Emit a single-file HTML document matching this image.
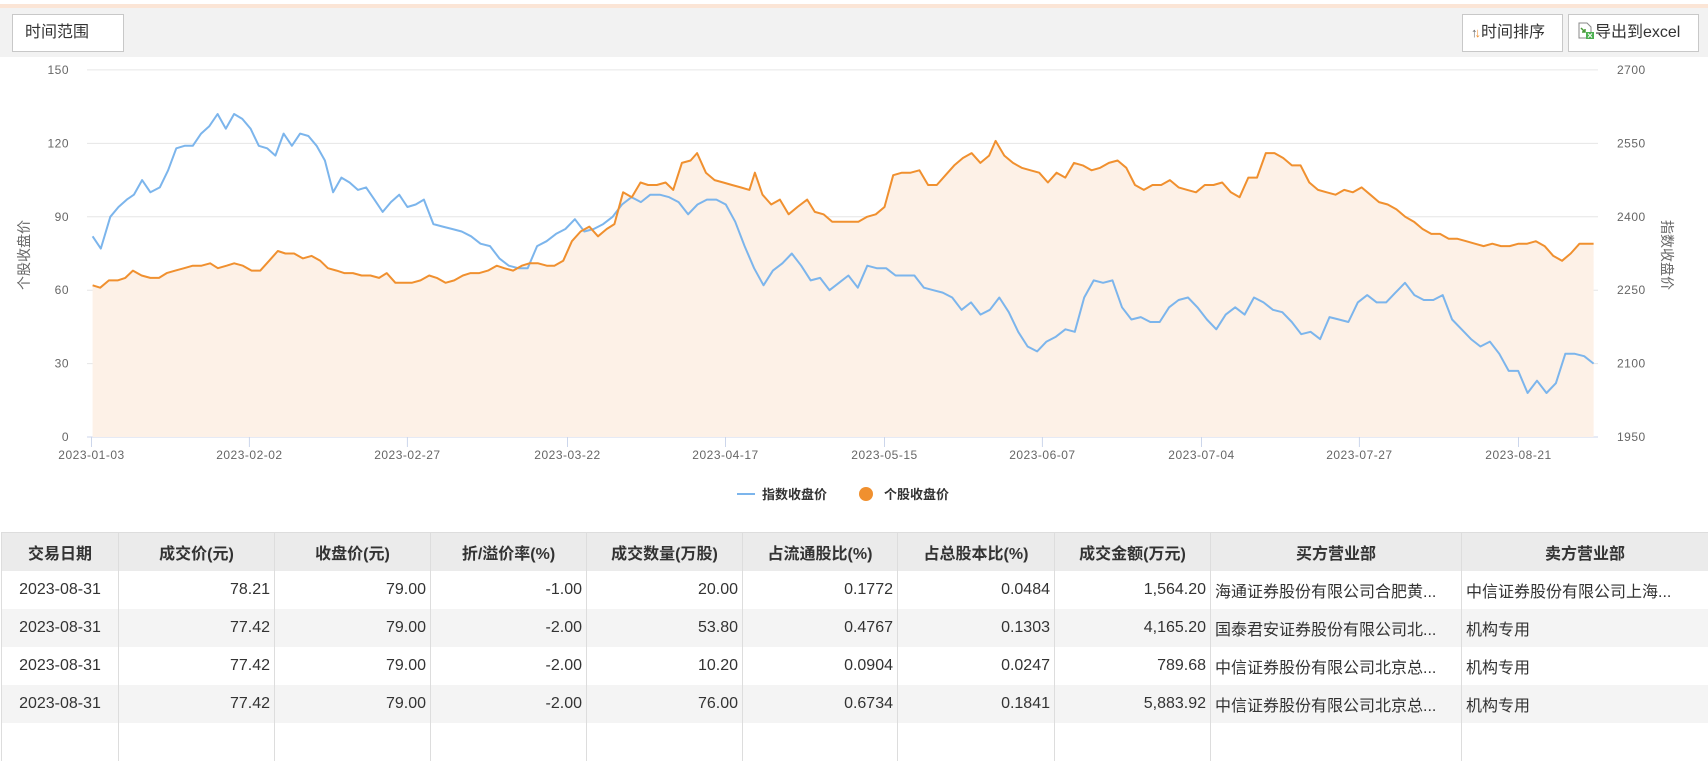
<!DOCTYPE html>
<html><head><meta charset="utf-8"><style>
*{margin:0;padding:0;box-sizing:border-box}
body{width:1708px;height:728px;overflow:hidden;background:#fff;font-family:"Liberation Sans","Noto Sans CJK SC",sans-serif;position:relative}
.top{position:absolute;left:0;top:4px;width:1708px;height:4px;background:#fbe5d6}
.bar{position:absolute;left:0;top:8px;width:1708px;height:49px;background:#f2f2f2}
.btn{position:absolute;background:#fff;border:1px solid #c8c8c8;font-size:16px;color:#333;line-height:36px;padding-left:12px}
table{position:absolute;left:1px;top:532px;border-collapse:collapse;width:1707px;font-size:16px;color:#333;table-layout:fixed}
th{background:#ebebeb;font-weight:bold;height:38px;border-left:1px solid #ddd;border-top:1px solid #ddd;text-align:center}
td{height:38px;border-left:1px solid #ddd;text-align:right;padding-right:4px;white-space:nowrap;overflow:hidden}
tr:nth-child(odd) td{background:#f4f4f4}
td.c{text-align:center;padding:0}
td.l{text-align:left;padding-left:4px}
svg{position:absolute;left:0;top:0}
</style></head><body>
<div class="top"></div>
<div class="bar"></div>
<div class="btn" style="left:12px;top:14px;width:112px;height:38px">时间范围</div>
<div class="btn" style="left:1462px;top:14px;width:101px;height:38px;padding-left:8px"><span style="color:#666;font-size:13px">↑</span><span style="color:#f0902f;font-size:13px;margin-left:-3px">↓</span>时间排序</div>
<div class="btn" style="left:1568px;top:14px;width:131px;height:38px;padding-left:8px"><svg style="position:relative;display:inline-block;vertical-align:-3px" width="18" height="18" viewBox="0 0 18 18"><path d="M2 1h8l4 4v11H2z" fill="#fff" stroke="#888"/><path d="M4 6l4 4M8 7v3H5" stroke="#4a9a3a" fill="none" stroke-width="1.5"/><rect x="9" y="10" width="8" height="7" fill="#4caf50"/><path d="M11 11.5l4 4M15 11.5l-4 4" stroke="#fff"/></svg>导出到excel</div>
<svg id="c" width="1708" height="520"></svg>
<table>
<colgroup><col style="width:117px"><col style="width:156px"><col style="width:156px"><col style="width:156px"><col style="width:156px"><col style="width:155px"><col style="width:157px"><col style="width:156px"><col style="width:251px"><col></colgroup>
<tr><th>交易日期</th><th>成交价(元)</th><th>收盘价(元)</th><th>折/溢价率(%)</th><th>成交数量(万股)</th><th>占流通股比(%)</th><th>占总股本比(%)</th><th>成交金额(万元)</th><th>买方营业部</th><th>卖方营业部</th></tr>
<tr><td class="c">2023-08-31</td><td>78.21</td><td>79.00</td><td>-1.00</td><td>20.00</td><td>0.1772</td><td>0.0484</td><td>1,564.20</td><td class="l">海通证券股份有限公司合肥黄...</td><td class="l">中信证券股份有限公司上海...</td></tr>
<tr><td class="c">2023-08-31</td><td>77.42</td><td>79.00</td><td>-2.00</td><td>53.80</td><td>0.4767</td><td>0.1303</td><td>4,165.20</td><td class="l">国泰君安证券股份有限公司北...</td><td class="l">机构专用</td></tr>
<tr><td class="c">2023-08-31</td><td>77.42</td><td>79.00</td><td>-2.00</td><td>10.20</td><td>0.0904</td><td>0.0247</td><td>789.68</td><td class="l">中信证券股份有限公司北京总...</td><td class="l">机构专用</td></tr>
<tr><td class="c">2023-08-31</td><td>77.42</td><td>79.00</td><td>-2.00</td><td>76.00</td><td>0.6734</td><td>0.1841</td><td>5,883.92</td><td class="l">中信证券股份有限公司北京总...</td><td class="l">机构专用</td></tr>
<tr><td class="c"></td><td></td><td></td><td></td><td></td><td></td><td></td><td></td><td></td><td></td></tr>
</table>
<script>
var S=1708/1568;
function X(x){return (x*S).toFixed(1)}
function Y(v){return (437-v*2.447).toFixed(1)}
var blue=[85,82,92,77,100,90,107,94,114,97,120,99,127,105,134,100,142,102,149,109,156,118,163,119,170,119,177,124,184,127,191,132,198,126,205,132,212,130,219,126,226,119,233,118,240,115,247,124,254,119,261,124,268,123,275,119,282,113,289,100,296,106,303,104,310,101,317,102,324,97,331,92,338,96,345,99,352,94,359,95,366,97,374,87,382,86,390,85,398,84,406,82,414,79,422,78,430,73,438,70,446,69,454,69,462,78,470,80,478,83,486,85,494,89,502,84,510,85,518,87,526,90,534,95,542,98,550,96,558,99,566,99,574,98,582,96,590,91,598,95,606,97,614,97,622,95,630,88,638,78,646,69,654,62,662,68,670,71,678,75,686,70,694,64,702,65,710,60,718,63,726,66,734,61,742,70,750,69,758,69,766,66,774,66,782,66,790,61,798,60,806,59,814,57,822,52,830,55,838,50,846,52,854,57,862,51,870,43,878,37,886,35,894,39,902,41,910,44,918,43,926,57,934,64,942,63,950,64,958,53,966,48,974,49,982,47,990,47,998,53,1006,56,1014,57,1022,53,1030,48,1038,44,1046,50,1054,53,1062,50,1070,57,1078,55,1086,52,1094,51,1102,47,1110,42,1118,43,1126,40,1134,49,1142,48,1150,47,1158,55,1166,58,1174,55,1182,55,1190,59,1198,63,1206,58,1214,56,1222,56,1230,58,1238,48,1246,44,1254,40,1262,37,1270,39,1278,34,1286,27,1294,27,1302,18,1310,23,1318,18,1326,22,1334,34,1342,34,1350,33,1358,30];
var bx=[];for(var i=0;i<blue.length;i+=2){bx.push([85+(blue[i]-85)*(1463-85)/(1358-85),blue[i+1]]);}
var org=[85,62,92,61,100,64,108,64,115,65,122,68,130,66,138,65,146,65,153,67,161,68,169,69,177,70,185,70,193,71,200,69,208,70,215,71,223,70,231,68,239,68,247,72,255,76,262,75,270,75,278,73,286,74,294,72,301,69,309,68,316,67,324,67,332,66,340,66,348,65,355,67,363,63,370,63,378,63,386,64,394,66,401,65,409,63,417,64,425,66,432,67,440,67,448,68,456,70,463,69,471,68,479,70,486,71,494,71,502,70,509,70,517,72,525,80,533,84,541,86,549,82,557,85,564,87,572,100,580,98,588,104,595,103,603,103,611,104,618,101,626,112,634,113,640,116,648,108,656,105,664,104,672,103,680,102,688,101,693,108,700,99,708,95,716,97,724,91,732,94,741,97,748,92,756,91,764,88,772,88,780,88,788,88,796,90,804,91,812,94,820,107,828,108,836,108,844,109,852,103,860,103,868,107,876,111,884,114,892,116,900,112,908,115,914,121,922,115,930,112,938,110,946,109,954,108,962,104,970,108,978,106,986,112,994,111,1002,109,1010,110,1018,112,1026,113,1034,110,1042,103,1050,101,1058,103,1066,103,1074,105,1082,102,1090,101,1098,100,1106,103,1114,103,1122,104,1130,100,1138,98,1146,106,1154,106,1162,116,1170,116,1178,114,1186,111,1194,111,1202,104,1210,101,1218,100,1226,99,1234,101,1242,100,1250,102,1258,99,1266,96,1274,95,1282,93,1290,90,1298,88,1306,85,1314,83,1322,83,1330,81,1338,81,1346,80,1354,79,1362,78,1370,79,1378,78,1386,78,1394,79,1402,79,1410,80,1418,78,1426,74,1434,72,1442,75,1450,79,1458,79,1463,79];
var s='';
[0,30,60,90,120,150].forEach(function(v){s+='<line x1="87" x2="1598" y1="'+Y(v)+'" y2="'+Y(v)+'" stroke="'+(v==0?'#ccd6eb':'#e6e6e6')+'"/>';s+='<text x="69" y="'+(+Y(v)+4)+'" text-anchor="end" font-size="12" fill="#666" letter-spacing="0.5">'+v+'</text>';});
[1950,2100,2250,2400,2550,2700].forEach(function(p,i){s+='<text x="1617" y="'+(+Y(i*30)+4)+'" font-size="12" fill="#666" letter-spacing="0.5">'+p+'</text>';});
var d=['2023-01-03','2023-02-02','2023-02-27','2023-03-22','2023-04-17','2023-05-15','2023-06-07','2023-07-04','2023-07-27','2023-08-21'];
var dx=[84,229,374,521,666,812,957,1103,1248,1394];
d.forEach(function(t,i){var x=X(dx[i]);s+='<line x1="'+x+'" x2="'+x+'" y1="437" y2="447" stroke="#ccd6eb"/><text x="'+x+'" y="459" text-anchor="middle" font-size="12" fill="#666" letter-spacing="0.5">'+t+'</text>';});
var op='';for(var i=0;i<org.length;i+=2){op+=(i?'L':'M')+X(org[i])+' '+Y(org[i+1]);}
s+='<path d="'+op+'L'+X(1463)+' 437L'+X(85)+' 437Z" fill="#fdf1e7"/>';
var bp='';bx.forEach(function(p,i){bp+=(i?'L':'M')+X(p[0])+' '+Y(p[1]);});
s+='<path d="'+bp+'" fill="none" stroke="#7cb5ec" stroke-width="2" stroke-linejoin="round"/>';
s+='<path d="'+op+'" fill="none" stroke="#f0902f" stroke-width="2" stroke-linejoin="round"/>';
s+='<text transform="translate(29 255) rotate(-90)" text-anchor="middle" font-size="14" fill="#666">个股收盘价</text>';
s+='<text transform="translate(1662 255) rotate(90)" text-anchor="middle" font-size="14" fill="#666">指数收盘价</text>';
s+='<line x1="737" x2="755" y1="494" y2="494" stroke="#7cb5ec" stroke-width="2"/><text x="762" y="499" font-size="13" font-weight="bold" fill="#333">指数收盘价</text>';
s+='<circle cx="866" cy="494" r="7" fill="#f0902f"/><text x="884" y="499" font-size="13" font-weight="bold" fill="#333">个股收盘价</text>';
document.getElementById('c').innerHTML=s;
</script>
</body></html>
